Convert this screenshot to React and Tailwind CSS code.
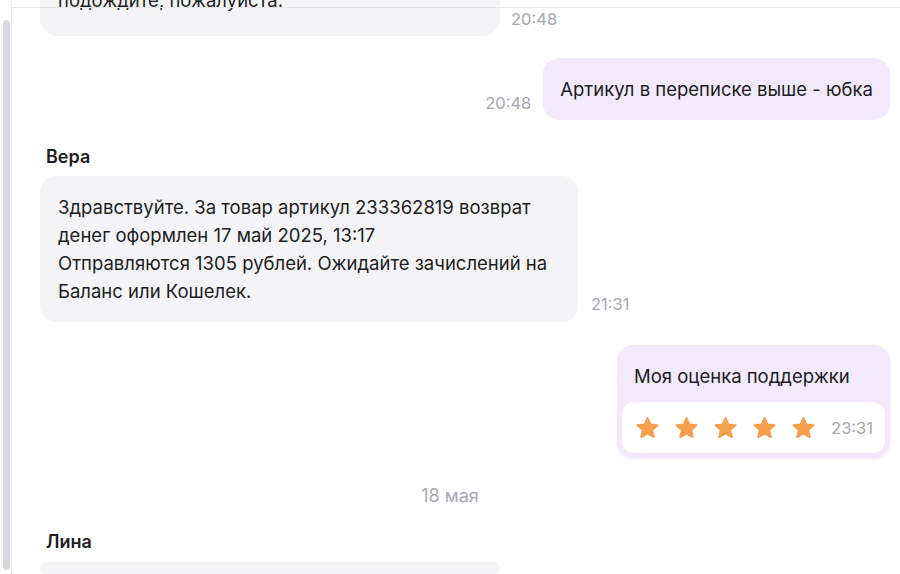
import React from 'react';

const Star = () => (
  <svg width="27" height="26" viewBox="0 0 24 24" className="shrink-0">
    <path
      d="M12 2.6l2.8 6.1 6.6.7-4.9 4.5 1.4 6.6L12 17.2l-5.9 3.3 1.4-6.6-4.9-4.5 6.6-.7z"
      fill="#f6a04d"
      stroke="#f6a04d"
      strokeWidth="1.6"
      strokeLinejoin="round"
    />
  </svg>
);

const Time = ({ children, className = '' }) => (
  <span className={`text-[16.5px] leading-5 text-[#a6a6ae] ${className}`}>{children}</span>
);

export default function App() {
  return (
    <div
      className="relative w-[900px] h-[574px] overflow-hidden bg-white flex text-[#1c1c21]"
      style={{ fontFamily: 'Inter, "Noto Sans", sans-serif' }}
    >
      {/* top border line */}
      <div className="absolute top-[7px] left-[10px] right-0 h-px bg-[#e6e6ea] z-10" />

      {/* scrollbar */}
      <div className="w-[12px] shrink-0 flex flex-col border-r border-[#ececf0]">
        <div className="ml-[3px] mt-[20px] w-[7px] h-[550px] rounded-full bg-[#d8d8de]" />
      </div>

      {/* messages */}
      <div className="flex-1 flex flex-col pl-[28px] pr-[10px] -mt-[31px]">
        {/* incoming cut off */}
        <div className="flex items-end gap-[11px]">
          <div className="w-[460px] bg-[#f4f4f7] rounded-[18px] px-[18px] pt-[17px] pb-[22px] text-[18.5px] leading-7">
            подождите, пожалуйста.
          </div>
          <Time className="mb-[7px]">20:48</Time>
        </div>

        {/* outgoing */}
        <div className="flex items-end justify-end gap-[12px] mt-[22px]">
          <Time className="mb-[7px]">20:48</Time>
          <div className="bg-[#f2e9fc] rounded-[16px] px-[17px] py-[17px] text-[18.5px] leading-7 whitespace-nowrap">
            Артикул в переписке выше - юбка
          </div>
        </div>

        {/* Вера */}
        <div className="mt-[27px] pl-[6px] text-[18px] leading-5 font-semibold">Вера</div>
        <div className="flex items-end gap-[13px] mt-[9px]">
          <div className="w-[538px] shrink-0 bg-[#f4f4f7] rounded-[16px] pl-[18px] pr-[12px] pt-[17px] pb-[17px] text-[18.5px] leading-7 whitespace-nowrap">
            Здравствуйте. За товар артикул 233362819 возврат
            <br />
            денег оформлен 17 май 2025, 13:17
            <br />
            Отправляются 1305 рублей. Ожидайте зачислений на
            <br />
            Баланс или Кошелек.
          </div>
          <Time className="mb-[8px]">21:31</Time>
        </div>

        {/* rating */}
        <div className="flex justify-end mt-[23px]">
          <div className="w-[273px] bg-[#f2e9fc] rounded-[16px] p-[5px] shadow-[0_1px_3px_rgba(120,90,180,0.12)]">
            <div className="px-[12px] pt-[12px] pb-[12px] text-[18.5px] leading-7 whitespace-nowrap">Моя оценка поддержки</div>
            <div className="bg-white rounded-[12px] h-[51px] flex items-center pl-[12px] pr-[12px]">
              <div className="flex items-center gap-[12px]">
                <Star />
                <Star />
                <Star />
                <Star />
                <Star />
              </div>
              <Time className="ml-auto">23:31</Time>
            </div>
          </div>
        </div>

        {/* date */}
        <div className="mt-[28px] text-center text-[18px] leading-5 text-[#a8a8b0] pr-[30px]">18 мая</div>

        {/* Лина */}
        <div className="mt-[26px] pl-[6px] text-[18px] leading-5 font-semibold">Лина</div>
        <div className="mt-[10px] w-[460px] h-[60px] bg-[#f4f4f7] rounded-[16px]" />
      </div>
    </div>
  );
}
